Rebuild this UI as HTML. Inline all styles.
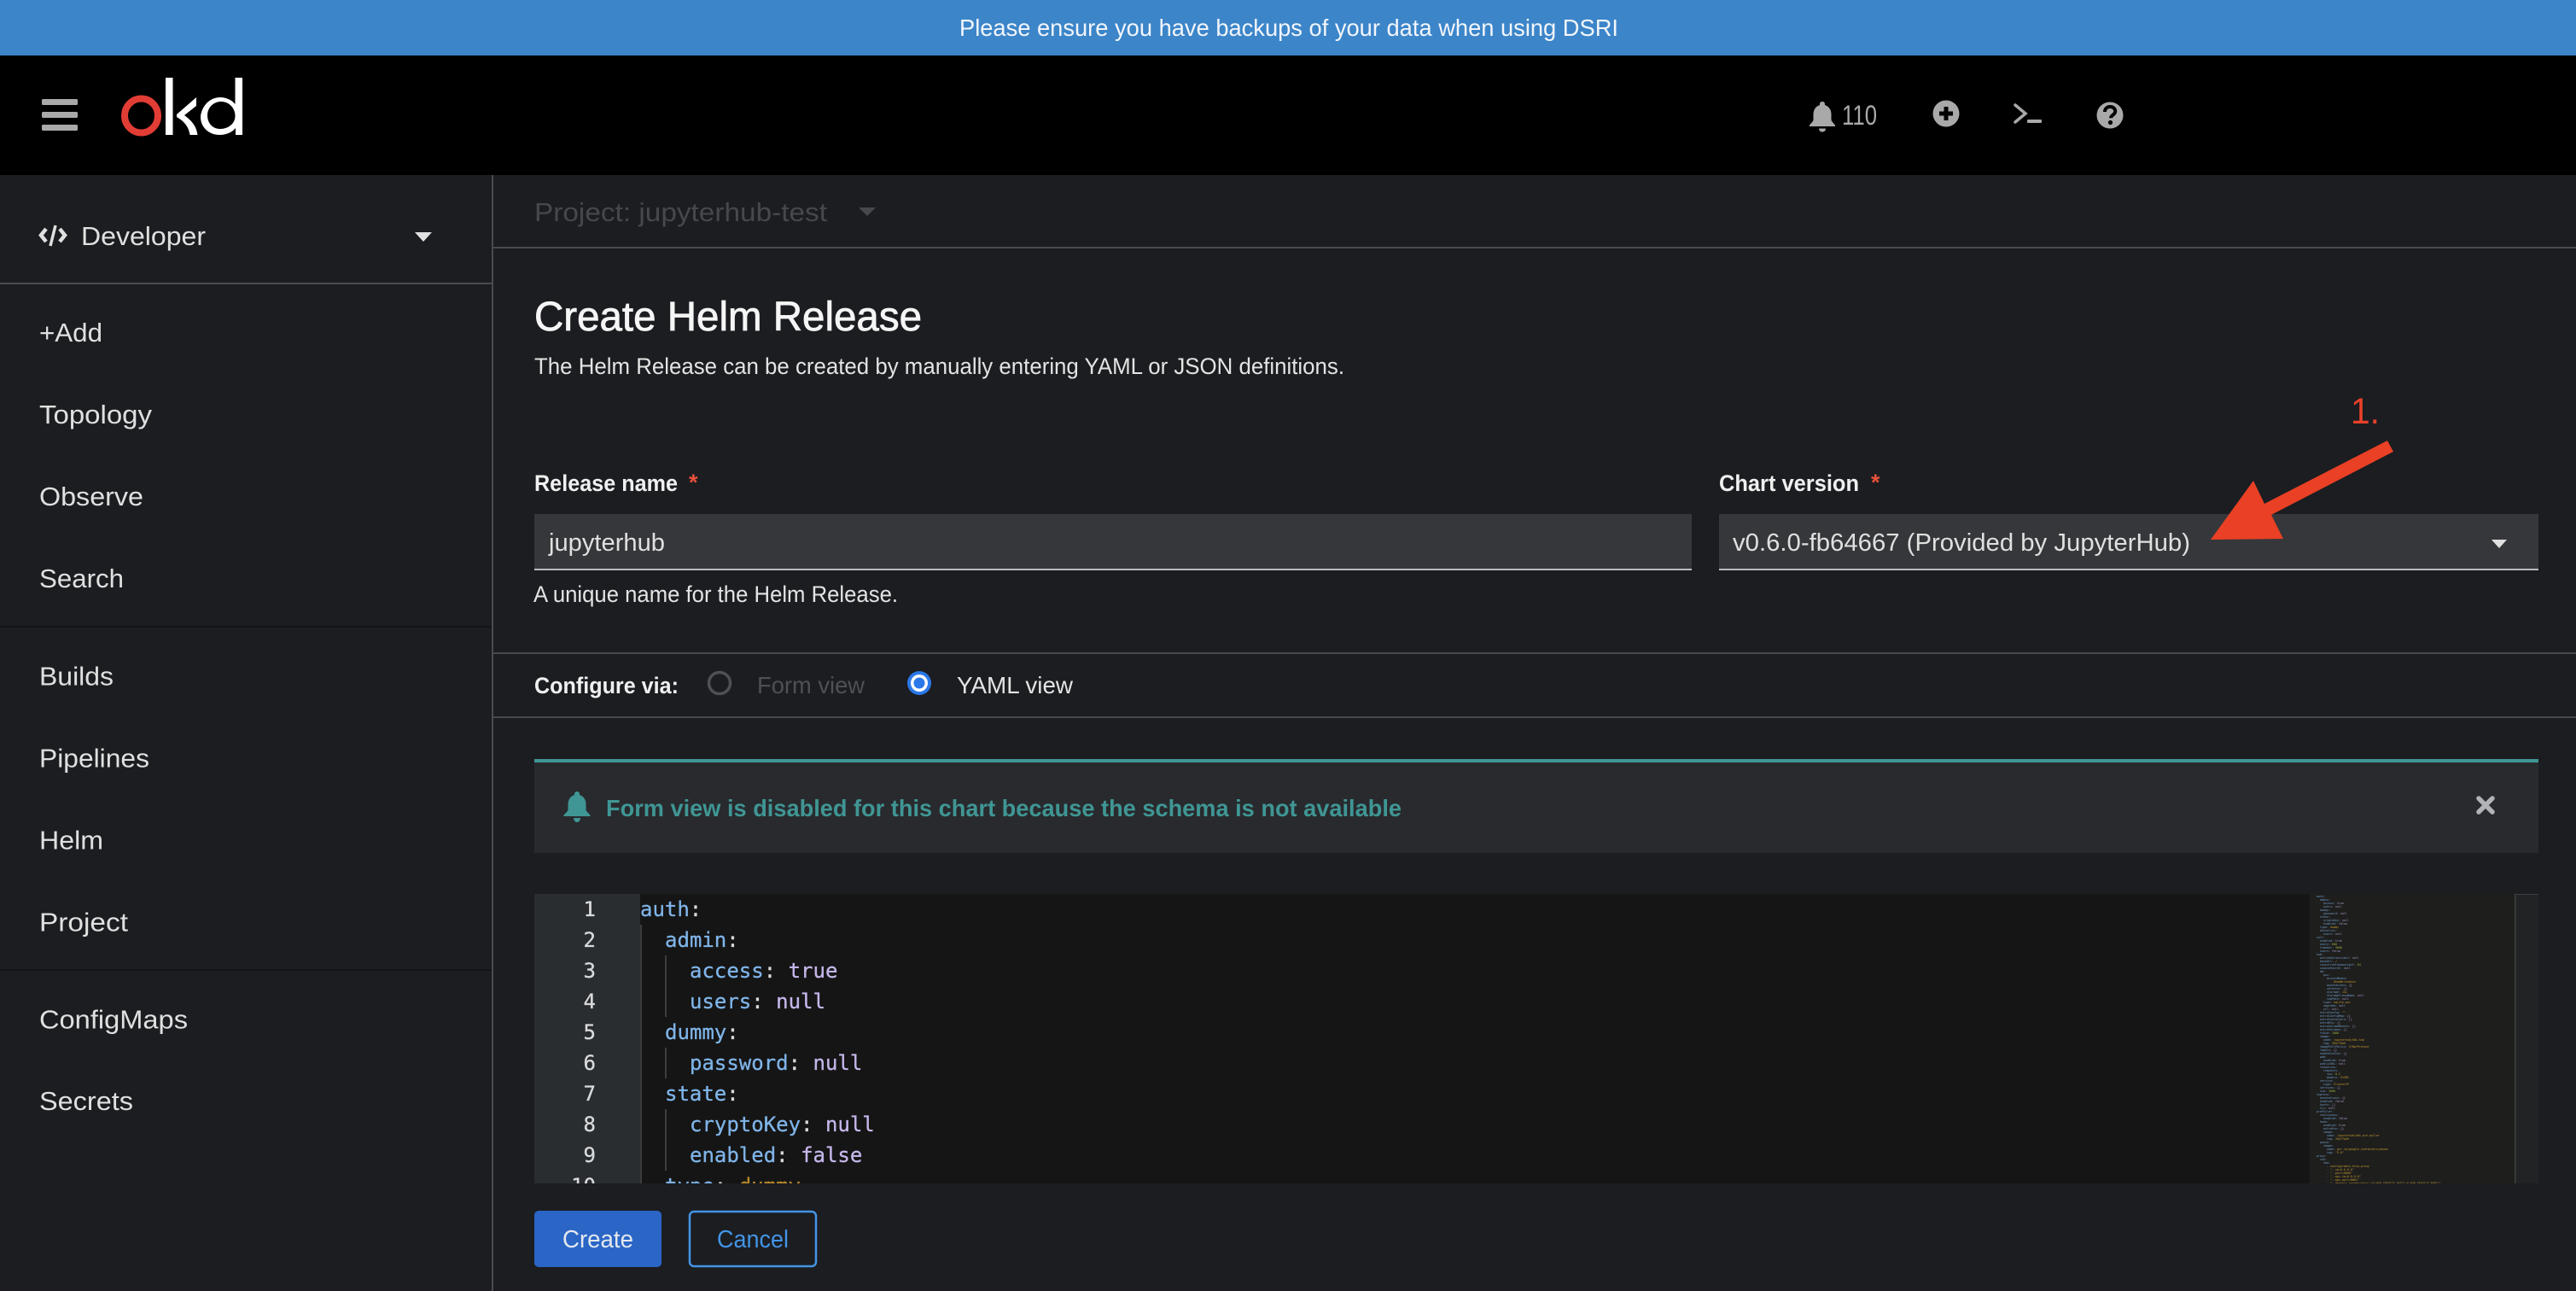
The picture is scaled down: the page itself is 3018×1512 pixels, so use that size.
<!DOCTYPE html>
<html><head><meta charset="utf-8"><title>Create Helm Release</title>
<style>
html,body{margin:0;padding:0;background:#1b1d21;width:3018px;height:1512px;overflow:hidden}
svg{display:block}
text{font-family:"Liberation Sans",sans-serif;white-space:pre}
.s{font-size:31px;fill:#e0e0e0}
.b{font-size:27px;font-weight:bold;fill:#f0f0f0}
.c{font-family:"DejaVu Sans Mono",monospace;font-size:24px;fill:#7fb4e8;stroke:#7fb4e8;stroke-width:.3px}
.n{font-family:"DejaVu Sans Mono",monospace;font-size:24px;fill:#d8dadb;stroke:#d8dadb;stroke-width:.3px;text-anchor:end}
.p{fill:#d8dadb;stroke:#d8dadb}
.v{fill:#c5b6ea;stroke:#c5b6ea}.o{fill:#b98a2a;stroke:#b98a2a}
.m{filter:blur(.3px)}
.m text{font-family:"DejaVu Sans Mono",monospace;font-size:3.32px;fill:#6f9cc8}
.m .v{fill:#a99bc8;stroke:none}.m .o{fill:#c49a2c;stroke:none}.m .g{fill:#9ab53a}
</style></head><body>
<svg width="3018" height="1512" viewBox="0 0 3018 1512" xmlns="http://www.w3.org/2000/svg">
<rect width="3018" height="1512" fill="#1b1d21"/>
<rect width="3018" height="65" fill="#3c85c9"/>
<text x="1124" y="42" font-size="28" fill="#f2f6fb" textLength="772" lengthAdjust="spacingAndGlyphs">Please ensure you have backups of your data when using DSRI</text>
<rect y="65" width="3018" height="140" fill="#000"/>
<g fill="#a9a9a9"><rect x="49" y="116" width="42" height="7" rx="1.5"/><rect x="49" y="131" width="42" height="7" rx="1.5"/><rect x="49" y="146" width="42" height="7" rx="1.5"/></g>
<g aria-label="okd">
<ellipse cx="165.500" cy="135.500" rx="19.500" ry="20" fill="none" stroke="#e23d35" stroke-width="8"/>
<rect x="194" y="91" width="8.500" height="67" fill="#fff"/>
<path d="M207 134 L230 114 V124 L216 135 C224 141 230 147 231.500 158 H222.500 C221 147 214 141 207 137Z" fill="#fff"/>
<path d="M275.500 122 C268 113 255 112 247 117 C237 123 235 134 235 137 C235 150 246 158 257 158 C265 158 272 155 276 150 V158 H284 V91 H275.500Z M275.500 136 C275.500 145 267 151 258 151 C249 151 243 144 243 135 C243 126 250 119 259 119 C268 119 275.500 126 275.500 136Z" fill="#fff" fill-rule="evenodd"/>
</g>
<path d="M2135 119c-1.800 0-3 1.200-3 3v1c-5 1.500-7.500 6-7.500 11v6c0 2-2 3.500-4.500 6.500v1.500h30v-1.500c-2.500-3-4.500-4.500-4.500-6.500v-6c0-5-2.500-9.500-7.500-11v-1c0-1.800-1.200-3-3-3zM2131 150.500h8c0 2.500-1.800 4-4 4s-4-1.500-4-4z" fill="#a9a9a9"/>
<text x="2158" y="146" font-size="32" fill="#a9a9a9" textLength="41" lengthAdjust="spacingAndGlyphs">110</text>
<circle cx="2280" cy="133" r="15.500" fill="#a9a9a9"/><path d="M2280 125v16M2272 133h16" stroke="#000" stroke-width="5"/>
<path d="M2361 123l12 10-12 10" fill="none" stroke="#a9a9a9" stroke-width="3.500" stroke-linecap="round" stroke-linejoin="miter"/><rect x="2375" y="140" width="17" height="4" rx="1" fill="#a9a9a9"/>
<circle cx="2472" cy="135" r="15.500" fill="#a9a9a9"/>
<path d="M2466 131c0-4 3-6 6.200-6 3.500 0 6 2.200 6 5.300 0 4.500-5.200 4.200-5.200 8" fill="none" stroke="#000" stroke-width="4"/><circle cx="2472.500" cy="143.500" r="2.600"/>

<!-- sidebar -->
<rect x="576" y="205" width="2" height="1307" fill="#4a4b4d"/>
<rect y="331" width="576" height="2" fill="#4a4b4d"/>
<rect y="733" width="576" height="2" fill="#141517"/>
<rect y="1135" width="576" height="2" fill="#141517"/>
<g fill="none" stroke="#e0e0e0" stroke-width="4.500"><path d="M54 268l-6 7.500 6 7.500M70 268l6 7.500-6 7.500"/><path d="M65 264l-6 24" stroke-width="3.500"/></g>
<text class="s" x="95" y="287" textLength="146" lengthAdjust="spacingAndGlyphs">Developer</text>
<path d="M486 272h20l-10 11z" fill="#e0e0e0"/>
<text class="s" x="46" y="400" textLength="74" lengthAdjust="spacingAndGlyphs">+Add</text>
<text class="s" x="46" y="496" textLength="132" lengthAdjust="spacingAndGlyphs">Topology</text>
<text class="s" x="46" y="592" textLength="122" lengthAdjust="spacingAndGlyphs">Observe</text>
<text class="s" x="46" y="688" textLength="99" lengthAdjust="spacingAndGlyphs">Search</text>
<text class="s" x="46" y="802.500" textLength="87" lengthAdjust="spacingAndGlyphs">Builds</text>
<text class="s" x="46" y="898.500" textLength="129" lengthAdjust="spacingAndGlyphs">Pipelines</text>
<text class="s" x="46" y="994.500" textLength="75" lengthAdjust="spacingAndGlyphs">Helm</text>
<text class="s" x="46" y="1090.500" textLength="104" lengthAdjust="spacingAndGlyphs">Project</text>
<text class="s" x="46" y="1204.500" textLength="174" lengthAdjust="spacingAndGlyphs">ConfigMaps</text>
<text class="s" x="46" y="1300" textLength="110" lengthAdjust="spacingAndGlyphs">Secrets</text>

<!-- project bar -->
<rect x="578" y="289" width="2440" height="2" fill="#4a4b4d"/>
<text x="626" y="259" font-size="31" fill="#46484b" textLength="343" lengthAdjust="spacingAndGlyphs">Project: jupyterhub-test</text>
<path d="M1006 243h20l-10 10z" fill="#46484b"/>

<!-- title -->
<text x="626" y="387" font-size="48" fill="#f5f5f5" stroke="#f5f5f5" stroke-width=".8" textLength="454" lengthAdjust="spacingAndGlyphs">Create Helm Release</text>
<text x="626" y="438" font-size="27" fill="#e4e4e4" textLength="949" lengthAdjust="spacingAndGlyphs">The Helm Release can be created by manually entering YAML or JSON definitions.</text>

<!-- form -->
<text class="b" x="626" y="575" textLength="168" lengthAdjust="spacingAndGlyphs">Release name</text>
<text x="807" y="574" font-size="27" font-weight="bold" fill="#e8503a">*</text>
<rect x="626" y="602" width="1356" height="66" fill="#36373a"/><rect x="626" y="666" width="1356" height="2" fill="#b8bbbe"/>
<text x="643" y="645" font-size="29" fill="#e0e0e0" textLength="136" lengthAdjust="spacingAndGlyphs">jupyterhub</text>
<text x="625" y="705" font-size="27" fill="#e4e4e4" textLength="427" lengthAdjust="spacingAndGlyphs">A unique name for the Helm Release.</text>

<text class="b" x="2014" y="575" textLength="164" lengthAdjust="spacingAndGlyphs">Chart version</text>
<text x="2192" y="574" font-size="27" font-weight="bold" fill="#e8503a">*</text>
<rect x="2014" y="602" width="960" height="66" fill="#36373a"/><rect x="2014" y="666" width="960" height="2" fill="#b8bbbe"/>
<text x="2030" y="645" font-size="29" fill="#e0e0e0" textLength="536" lengthAdjust="spacingAndGlyphs">v0.6.0-fb64667 (Provided by JupyterHub)</text>
<path d="M2919 632h18l-9 10z" fill="#e0e0e0"/>

<rect x="578" y="764" width="2440" height="2" fill="#48494b"/>
<rect x="578" y="839" width="2440" height="2" fill="#48494b"/>
<text class="b" x="626" y="812" textLength="169" lengthAdjust="spacingAndGlyphs">Configure via:</text>
<circle cx="843" cy="800" r="12.500" fill="none" stroke="#4f5055" stroke-width="3.500"/>
<text x="887" y="812" font-size="28" fill="#4e5053" textLength="126" lengthAdjust="spacingAndGlyphs">Form view</text>
<circle cx="1077" cy="800" r="14" fill="#2b78e8"/><circle cx="1077" cy="800" r="10" fill="#fff"/><circle cx="1077" cy="800" r="6.500" fill="#2b78e8"/>
<text x="1121" y="812" font-size="28" fill="#e4e4e4" textLength="136" lengthAdjust="spacingAndGlyphs">YAML view</text>

<!-- alert -->
<rect x="626" y="889" width="2348" height="110" fill="#292a2e"/>
<rect x="626" y="889" width="2348" height="4" fill="#3f9694"/>
<path d="M676 927c-1.800 0-3 1.200-3 3v1c-5 1.500-7.500 6-7.500 11v6c0 2-2 3.500-5 6.500v1.500h31v-1.500c-3-3-5-4.500-5-6.500v-6c0-5-2.500-9.500-7.500-11v-1c0-1.800-1.200-3-3-3zM672 958h8c0 2.500-1.800 5-4 5s-4-2.500-4-5z" fill="#3f9694"/>
<text x="710" y="956" font-size="28" font-weight="bold" fill="#3f9694" textLength="932" lengthAdjust="spacingAndGlyphs">Form view is disabled for this chart because the schema is not available</text>
<path d="M2904 935l16 16M2920 935l-16 16" stroke="#b2b3b6" stroke-width="5.500" stroke-linecap="round"/>

<!-- editor -->
<rect x="626" y="1047" width="2348" height="339" fill="#212325"/>
<rect x="750" y="1047" width="1956" height="339" fill="#151515"/>
<rect x="2706" y="1047" width="240" height="339" fill="#1e1e1d"/>
<rect x="626" y="1047" width="124" height="339" fill="#2a2d30"/>
<rect x="2946" y="1047" width="1.500" height="339" fill="#3e3f40"/>
<rect x="2946" y="1047" width="28" height="1" fill="#3e3f40"/>
<rect x="750" y="1083" width="2" height="303" fill="#3a3b3c"/>
<g fill="#3d3e3f"><rect x="779" y="1119" width="2" height="72"/><rect x="779" y="1227" width="2" height="36"/><rect x="779" y="1299" width="2" height="72"/></g>
<g>
<text class="n" x="698" y="1073">1</text><text class="n" x="698" y="1109">2</text><text class="n" x="698" y="1145">3</text><text class="n" x="698" y="1181">4</text><text class="n" x="698" y="1217">5</text><text class="n" x="698" y="1253">6</text><text class="n" x="698" y="1289">7</text><text class="n" x="698" y="1325">8</text><text class="n" x="698" y="1361">9</text><text class="n" x="698" y="1397">10</text>
<text class="c" x="750" y="1073">auth<tspan class="p">:</tspan></text>
<text class="c" x="779" y="1109">admin<tspan class="p">:</tspan></text>
<text class="c" x="808" y="1145">access<tspan class="p">: </tspan><tspan class="v">true</tspan></text>
<text class="c" x="808" y="1181">users<tspan class="p">: </tspan><tspan class="v">null</tspan></text>
<text class="c" x="779" y="1217">dummy<tspan class="p">:</tspan></text>
<text class="c" x="808" y="1253">password<tspan class="p">: </tspan><tspan class="v">null</tspan></text>
<text class="c" x="779" y="1289">state<tspan class="p">:</tspan></text>
<text class="c" x="808" y="1325">cryptoKey<tspan class="p">: </tspan><tspan class="v">null</tspan></text>
<text class="c" x="808" y="1361">enabled<tspan class="p">: </tspan><tspan class="v">false</tspan></text>
<text class="c" x="779" y="1397">type<tspan class="p">: </tspan><tspan class="o">dummy</tspan></text>
</g>
<g class="m">
<text x="2714" y="1051">auth:</text>
<text x="2718" y="1055">admin:</text>
<text x="2722" y="1059">access: <tspan class="v">true</tspan></text>
<text x="2722" y="1063">users: <tspan class="v">null</tspan></text>
<text x="2718" y="1067">dummy:</text>
<text x="2722" y="1071">password: <tspan class="v">null</tspan></text>
<text x="2718" y="1075">state:</text>
<text x="2722" y="1079">cryptoKey: <tspan class="v">null</tspan></text>
<text x="2722" y="1083">enabled: <tspan class="v">false</tspan></text>
<text x="2718" y="1087">type: <tspan class="o">dummy</tspan></text>
<text x="2718" y="1091">whitelist:</text>
<text x="2722" y="1095">users: <tspan class="v">null</tspan></text>
<text x="2714" y="1099">cull:</text>
<text x="2718" y="1103">enabled: <tspan class="v">true</tspan></text>
<text x="2718" y="1107">every: <tspan class="g">600</tspan></text>
<text x="2718" y="1111">timeout: <tspan class="g">3600</tspan></text>
<text x="2718" y="1115">users: <tspan class="v">false</tspan></text>
<text x="2714" y="1119">hub:</text>
<text x="2718" y="1123">activeServerLimit: <tspan class="v">null</tspan></text>
<text x="2718" y="1127">baseUrl: <tspan class="o">/</tspan></text>
<text x="2718" y="1131">concurrentSpawnLimit: <tspan class="g">64</tspan></text>
<text x="2718" y="1135">cookieSecret: <tspan class="v">null</tspan></text>
<text x="2718" y="1139">db:</text>
<text x="2722" y="1143">pvc:</text>
<text x="2726" y="1147">accessModes:</text>
<text x="2730" y="1151">- <tspan class="o">ReadWriteOnce</tspan></text>
<text x="2726" y="1155">annotations: <tspan class="v">{}</tspan></text>
<text x="2726" y="1159">selector: <tspan class="v">{}</tspan></text>
<text x="2726" y="1163">storage: <tspan class="o">1Gi</tspan></text>
<text x="2726" y="1167">storageClassName: <tspan class="v">null</tspan></text>
<text x="2726" y="1171">subPath: <tspan class="v">null</tspan></text>
<text x="2722" y="1175">type: <tspan class="o">sqlite-pvc</tspan></text>
<text x="2722" y="1179">upgrade: <tspan class="v">null</tspan></text>
<text x="2722" y="1183">url: <tspan class="v">null</tspan></text>
<text x="2718" y="1187">extraConfig: <tspan class="o">""</tspan></text>
<text x="2718" y="1191">extraConfigMap: <tspan class="v">{}</tspan></text>
<text x="2718" y="1195">extraContainers: <tspan class="v">[]</tspan></text>
<text x="2718" y="1199">extraEnv: <tspan class="v">{}</tspan></text>
<text x="2718" y="1203">extraVolumeMounts: <tspan class="v">[]</tspan></text>
<text x="2718" y="1207">extraVolumes: <tspan class="v">[]</tspan></text>
<text x="2718" y="1211">fsGid: <tspan class="g">1000</tspan></text>
<text x="2718" y="1215">image:</text>
<text x="2722" y="1219">name: <tspan class="o">jupyterhub/k8s-hub</tspan></text>
<text x="2722" y="1223">tag: <tspan class="o">2b5f7da9</tspan></text>
<text x="2718" y="1227">imagePullPolicy: <tspan class="o">IfNotPresent</tspan></text>
<text x="2718" y="1231">labels: <tspan class="v">{}</tspan></text>
<text x="2718" y="1235">nodeSelector: <tspan class="v">{}</tspan></text>
<text x="2718" y="1239">pdb:</text>
<text x="2722" y="1243">enabled: <tspan class="v">true</tspan></text>
<text x="2718" y="1247">publicURL: <tspan class="v">null</tspan></text>
<text x="2718" y="1251">resources:</text>
<text x="2722" y="1255">requests:</text>
<text x="2726" y="1259">cpu: <tspan class="g">0.2</tspan></text>
<text x="2726" y="1263">memory: <tspan class="o">512Mi</tspan></text>
<text x="2718" y="1267">service:</text>
<text x="2722" y="1271">type: <tspan class="o">ClusterIP</tspan></text>
<text x="2718" y="1275">services: <tspan class="v">{}</tspan></text>
<text x="2718" y="1279">uid: <tspan class="g">1000</tspan></text>
<text x="2714" y="1283">ingress:</text>
<text x="2718" y="1287">annotations: <tspan class="v">{}</tspan></text>
<text x="2718" y="1291">enabled: <tspan class="v">false</tspan></text>
<text x="2718" y="1295">hosts: <tspan class="v">[]</tspan></text>
<text x="2718" y="1299">tls: <tspan class="v">null</tspan></text>
<text x="2714" y="1303">prePuller:</text>
<text x="2718" y="1307">continuous:</text>
<text x="2722" y="1311">enabled: <tspan class="v">false</tspan></text>
<text x="2718" y="1315">hook:</text>
<text x="2722" y="1319">enabled: <tspan class="v">true</tspan></text>
<text x="2722" y="1323">extraEnv: <tspan class="v">{}</tspan></text>
<text x="2722" y="1327">image:</text>
<text x="2726" y="1331">name: <tspan class="o">jupyterhub/k8s-pre-puller</tspan></text>
<text x="2726" y="1335">tag: <tspan class="o">2b5f7da9</tspan></text>
<text x="2718" y="1339">pause:</text>
<text x="2722" y="1343">image:</text>
<text x="2726" y="1347">name: <tspan class="o">gcr.io/google_containers/pause</tspan></text>
<text x="2726" y="1351">tag: <tspan class="o">"3.0"</tspan></text>
<text x="2714" y="1355">proxy:</text>
<text x="2718" y="1359">chp:</text>
<text x="2722" y="1363">cmd:</text>
<text x="2726" y="1367">- <tspan class="o">configurable-http-proxy</tspan></text>
<text x="2726" y="1371">- <tspan class="o">"--ip=0.0.0.0"</tspan></text>
<text x="2726" y="1375">- <tspan class="o">"--port=8000"</tspan></text>
<text x="2726" y="1379">- <tspan class="o">"--api-ip=0.0.0.0"</tspan></text>
<text x="2726" y="1383">- <tspan class="o">"--api-port=8001"</tspan></text>
<text x="2726" y="1387">- <tspan class="o">"--default-target=http://$(HUB_SERVICE_HOST):$(HUB_SERVICE_PORT)"</tspan></text>
</g>

<!-- footer -->
<rect x="578" y="1386" width="2440" height="126" fill="#1b1d21"/>
<rect x="626" y="1418" width="149" height="66" rx="5" fill="#2b66c7"/>
<text x="659" y="1461" font-size="29" fill="#e4e8ee" textLength="83" lengthAdjust="spacingAndGlyphs">Create</text>
<rect x="808" y="1419" width="148" height="64" rx="5" fill="none" stroke="#4394e5" stroke-width="2.500"/>
<text x="840" y="1461" font-size="29" fill="#4394e5" textLength="84" lengthAdjust="spacingAndGlyphs">Cancel</text>

<!-- annotation -->
<text x="2754" y="496" font-size="43" fill="#e8412a" textLength="34" lengthAdjust="spacingAndGlyphs">1.</text>
<path d="M2797 516L2804 529L2661 603L2675 631L2590 632L2640 563L2653 590Z" fill="#ea4025"/>
</svg>
</body></html>
